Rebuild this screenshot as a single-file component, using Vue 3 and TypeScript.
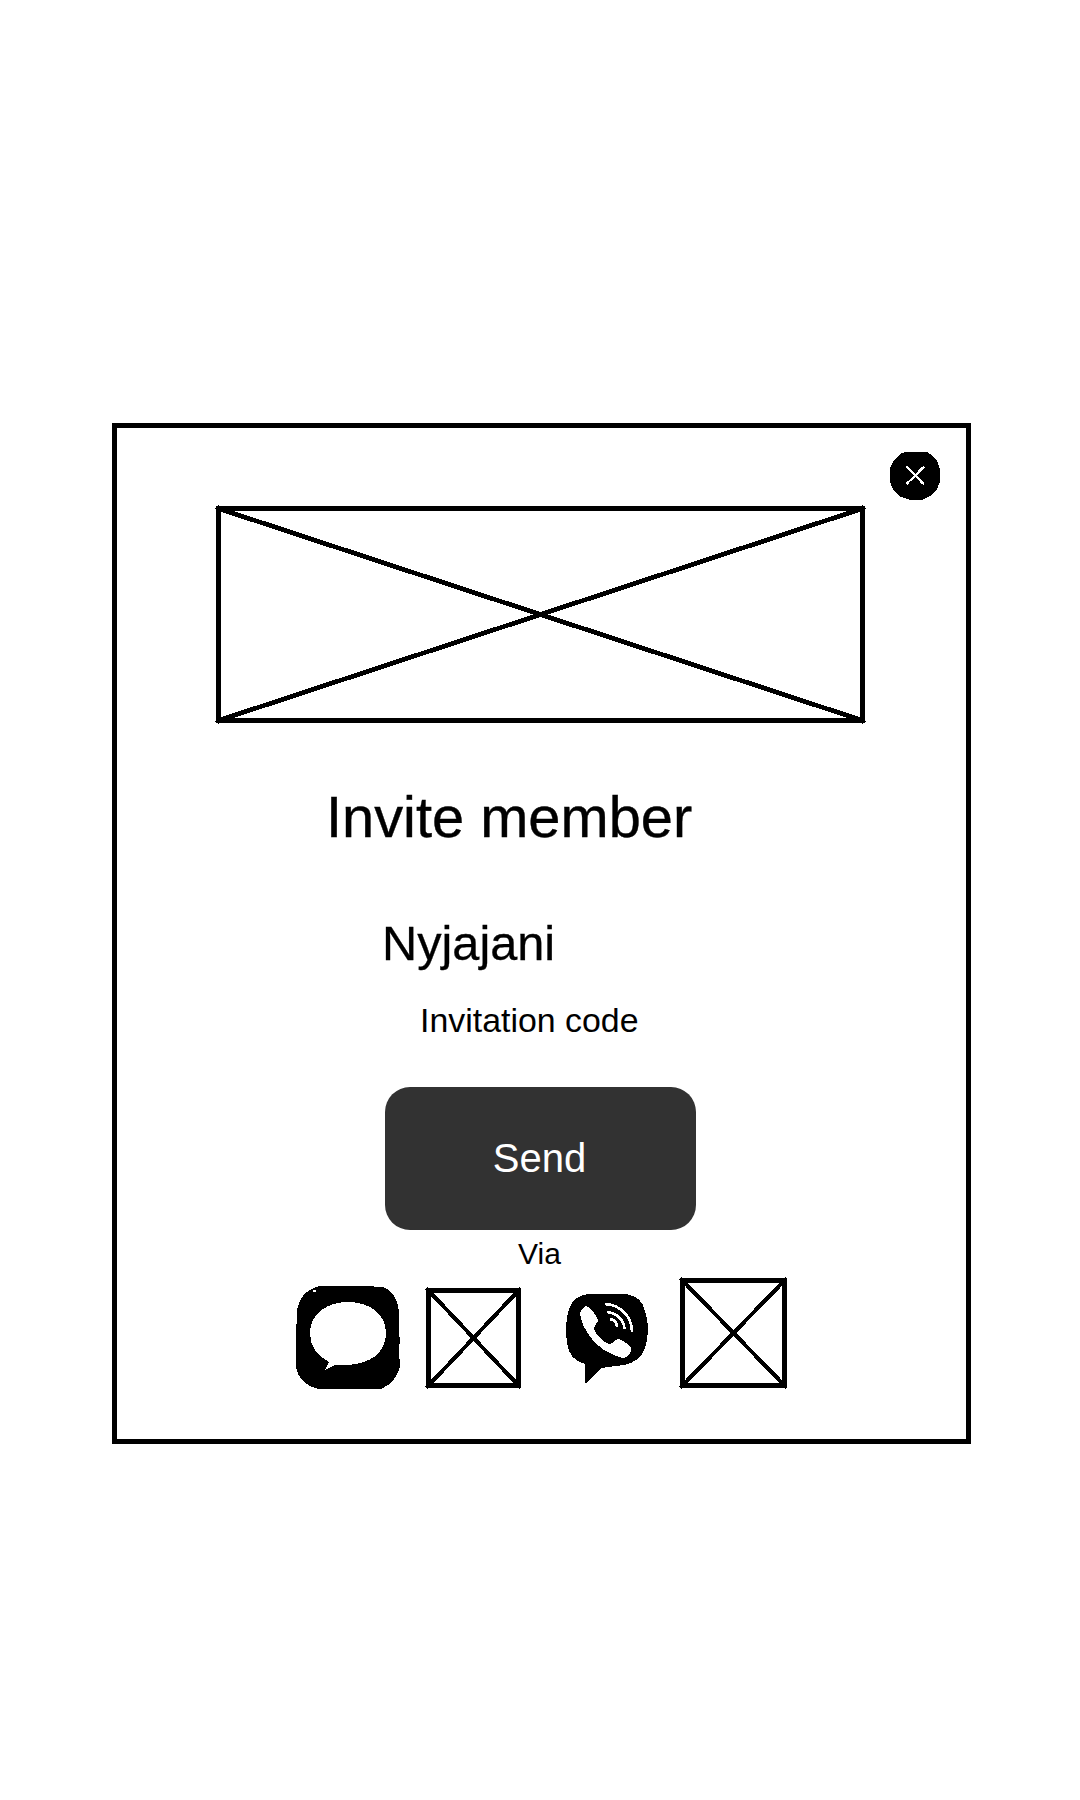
<script setup lang="ts">
const title: string = 'Invite member'
const member: string = 'Nyjajani'
</script>

<template>
  <main class="page">
    <section class="card">
      <header class="top">
        <button class="close" aria-label="Close">
          <svg width="50" height="48" viewBox="0 0 50 48" shape-rendering="crispEdges">
            <path d="M15 0H37L42 3L47 9L50 17V30L47 37L42 43L32 48H20L9 44L3 37L0 30V16L4 8L10 2Z" />
            <path d="M16.5 14.5L34 32M34.5 14.5L16.5 32" stroke="#fff" stroke-width="2" />
            <path d="M28.5 20L34 15M30.5 29L34 32M16.5 32L19 30M16.5 14.5L18.5 16.5" stroke="#fff" stroke-width="2.7" />
          </svg>
        </button>
      </header>

      <svg class="banner" width="652" height="219" viewBox="0 0 652 219" shape-rendering="crispEdges">
        <path d="M3.5 3.5H647.5V215.5H3.5Z" fill="none" stroke="#000" stroke-width="5" />
        <path d="M3.5 3.5L647.5 215.5M3.5 215.5L647.5 3.5" stroke="#000" stroke-width="4.7" />
        <path d="M0 3.5H7M3.5 0V7M644 3.5H651M647.5 0V7M0 216.5H7M3.5 212V219M644 216.5H651M647.5 212V219" stroke="#000" stroke-width="1.5" />
      </svg>

      <h1 class="title">{{ title }}</h1>
      <p class="name">{{ member }}</p>
      <p class="code">Invitation code</p>
      <button class="send">Send</button>
      <p class="via">Via</p>

      <div class="channels">
        <svg class="sms" width="104" height="104" viewBox="0 0 104 104" shape-rendering="crispEdges">
          <path d="M24 0H75L81 1H87C95 4 100 11 102 19L103 26V51H104V58H103V73H104V80C102 90 96 98 85 103H22C9 100 2 92 0 81V53L1 24C3 12 10 4 20 1Z" />
          <path d="M52 16C75 16 90 29 90 47C90 67 74 78 51 79H39L29 84L33 76C22 70 14 62 14 47C14 28 31 16 52 16Z" fill="#fff" />
          <path d="M17 4H20V6H17Z" fill="#fff" />
        </svg>

        <svg class="box-small" width="96" height="102" viewBox="0 0 96 102" shape-rendering="crispEdges">
          <path d="M3.5 3.5H93.5V98.5H3.5Z" fill="none" stroke="#000" stroke-width="5" />
          <path d="M3.5 3.5L93.5 98.5M93.5 3.5L3.5 98.5" stroke="#000" stroke-width="4" />
          <path d="M0 2.5H5M2.5 0V5M91 2.5H96M94.5 0V5M0 99.5H5M2.5 97V102M91 99.5H96M94.5 97V102" stroke="#000" />
        </svg>

        <svg class="viber" width="82" height="90" viewBox="0 0 82 90" shape-rendering="crispEdges">
          <path d="M22 0H60C72 2 77 8 79 17C83 28 83 42 79 54C75 64 70 68 58 71L35 74L22 88L19 89V70C8 67 3 61 1 49C-1 36 0 25 3 15C7 5 13 1 22 0Z" />
          <path d="M20 12C23 12 31 21 32 26C32 29 28 31 28 35C29 40 38 49 43 50C47 50 49 45 52 45C56 45 62 50 65 54C66 59 62 63 58 64C53 64 45 60 38 56C29 50 22 41 17 31C15 25 13 19 15 16Z" fill="#fff" />
          <path d="M39 10C55 11 66 23 66 38M41 18C51 19 58 26 58.5 35M44 25C49 26 51 29 51 33" fill="none" stroke="#fff" stroke-width="2.6" />
        </svg>

        <svg class="box-large" width="108" height="110" viewBox="0 0 108 110" shape-rendering="crispEdges">
          <path d="M3.5 3.5H105.5V108.5H3.5Z" fill="none" stroke="#000" stroke-width="5" />
          <path d="M3.5 3.5L105.5 108.5M105.5 3.5L3.5 108.5" stroke="#000" stroke-width="4" />
          <path d="M0 2.5H5M2.5 0V5M103 2.5H108M106.5 0V5M0 109.5H5M2.5 107V112M103 109.5H108M106.5 107V112" stroke="#000" />
        </svg>
      </div>
    </section>
  </main>
</template>

<style>
body {
  margin: 0;
  background: #fff;
}
</style>

<style scoped>
.page {
  box-sizing: border-box;
  width: 1080px;
  height: 1800px;
  padding: 423px 109px 356px 112px;
  background: #fff;
  color: #000;
  font-family: "Liberation Sans", Arial, sans-serif;
}

.card {
  box-sizing: border-box;
  display: flex;
  flex-direction: column;
  align-items: flex-start;
  width: 859px;
  height: 1021px;
  border: 5px solid #000;
}

.top {
  display: flex;
  align-self: stretch;
  justify-content: flex-end;
  padding: 24px 26px 0 0;
}

.close {
  display: block;
  width: 50px;
  height: 48px;
  padding: 0;
  border: 0;
  background: none;
}

svg {
  display: block;
  flex: none;
  overflow: visible;
}

.banner {
  margin: 5px 0 0 98px;
}

.title,
.name,
.code,
.via {
  margin: 0;
  font-weight: 400;
  white-space: nowrap;
}

.title {
  margin: 61px 0 0 209px;
  font-size: 57.8px;
  line-height: 64px;
  -webkit-text-stroke: 0.4px #000;
}

.name {
  margin: 66px 0 0 265px;
  font-size: 48.7px;
  line-height: 56px;
  -webkit-text-stroke: 0.3px #000;
}

.code {
  margin: 29px 0 0 303px;
  font-size: 33.9px;
  line-height: 40px;
}

.send {
  width: 311px;
  height: 143px;
  margin: 47px 0 0 268px;
  padding: 0 2px 2px 0;
  border: 0;
  border-radius: 25px;
  background: #323232;
  color: #fff;
  font-family: inherit;
  font-size: 40px;
  line-height: 46px;
}

.via {
  margin: 7px 0 0 401px;
  font-size: 30px;
  line-height: 34px;
}

.channels {
  display: flex;
  align-items: flex-start;
  margin: 6px 0 0 179px;
}

.sms {
  margin-top: 9px;
}

.box-small {
  margin: 10px 0 0 25px;
}

.viber {
  margin: 17px 0 0 45px;
}

.box-large {
  margin-left: 31px;
}
</style>
